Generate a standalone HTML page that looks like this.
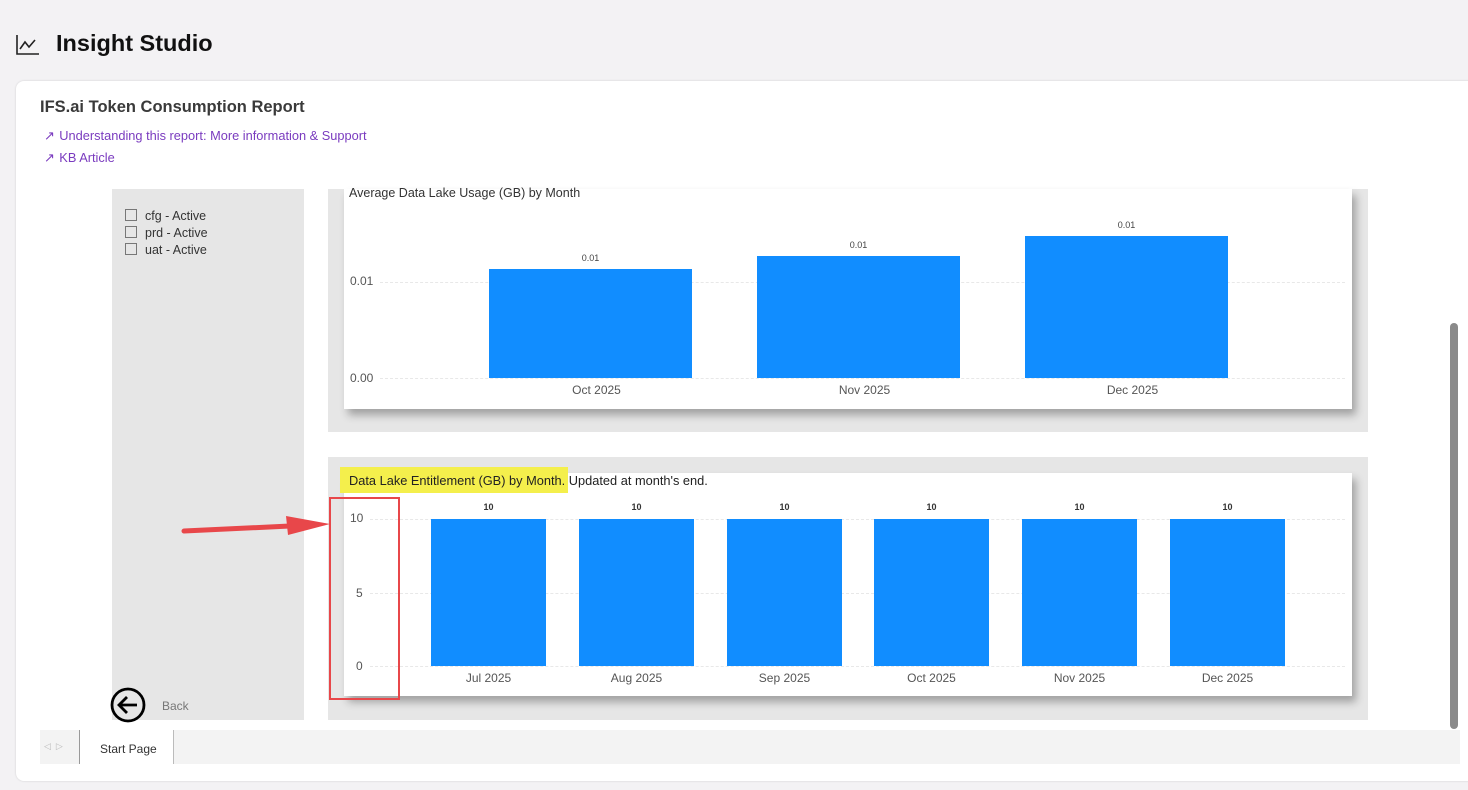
<!DOCTYPE html>
<html><head><meta charset="utf-8"><style>
*{margin:0;padding:0;box-sizing:border-box}
body{width:1468px;height:790px;background:#f3f2f4;font-family:"Liberation Sans",sans-serif;position:relative;overflow:hidden}
.a{position:absolute}
.t{font-size:12px;color:#555}
.bar{position:absolute;background:#118dff}
.g{position:absolute;height:0;border-top:1px dashed #e8e8e8}
</style></head><body>
<svg class="a" style="left:16px;top:34px" width="24" height="22" viewBox="0 0 24 22"><path d="M1 1V20H23" fill="none" stroke="#222" stroke-width="1.6"/><path d="M4 15L9 8L13 13L19 6" fill="none" stroke="#222" stroke-width="1.6"/></svg>
<div class="a" style="left:56px;top:30px;font-size:23.5px;font-weight:bold;color:#111">Insight Studio</div>
<div class="a" style="left:16px;top:81px;width:1470px;height:700px;background:#fff;border-radius:8px;box-shadow:0 0 2px rgba(0,0,0,.15)"></div>
<div class="a" style="left:40px;top:98px;font-size:16.5px;font-weight:bold;color:#3a3a3a">IFS.ai Token Consumption Report</div>
<div class="a" style="left:44px;top:128px;font-size:12.8px;color:#7a3bbf">&#x2197;&#xFE0E; <span style="margin-left:1px">Understanding this report: More information &amp; Support</span></div>
<div class="a" style="left:44px;top:150px;font-size:12.8px;color:#7a3bbf">&#x2197;&#xFE0E; <span style="margin-left:1px">KB Article</span></div>
<div class="a" style="left:112px;top:189px;width:192px;height:531px;background:#e6e6e6"></div>
<div class="a" style="left:125px;top:208px;font-size:12.5px;color:#333;line-height:17px">
<div><span style="display:inline-block;width:12px;height:12px;border:1px solid #777;vertical-align:-1px;margin-right:8px"></span>cfg - Active</div>
<div><span style="display:inline-block;width:12px;height:12px;border:1px solid #777;vertical-align:-1px;margin-right:8px"></span>prd - Active</div>
<div><span style="display:inline-block;width:12px;height:12px;border:1px solid #777;vertical-align:-1px;margin-right:8px"></span>uat - Active</div></div>
<svg class="a" style="left:109px;top:686px" width="38" height="38"><circle cx="19" cy="19" r="16" fill="none" stroke="#000" stroke-width="2.8"/><path d="M28 19H11M18 11L10 19L18 27" fill="none" stroke="#000" stroke-width="2.8"/></svg>
<div class="a t" style="left:162px;top:699px;color:#777">Back</div>
<!-- top chart -->
<div class="a" style="left:328px;top:189px;width:1040px;height:243px;background:#e6e6e6"></div>
<div class="a" style="left:344px;top:189px;width:1008px;height:220px;background:#fff;box-shadow:4px 6px 8px rgba(0,0,0,.3)"></div>
<div class="a" style="left:349px;top:186px;font-size:12.5px;color:#333">Average Data Lake Usage (GB) by Month</div>
<div class="g" style="left:380px;top:282px;width:965px"></div>
<div class="g" style="left:380px;top:378px;width:965px"></div>
<div class="a t" style="left:350px;top:274px">0.01</div>
<div class="a t" style="left:350px;top:371px">0.00</div>
<div class="bar" style="left:489px;top:269px;width:203px;height:109px"></div>
<div class="bar" style="left:757px;top:256px;width:203px;height:122px"></div>
<div class="bar" style="left:1025px;top:236px;width:203px;height:142px"></div>
<div class="a" style="left:489px;width:203px;top:253px;text-align:center;font-size:9px;color:#444">0.01</div>
<div class="a" style="left:757px;width:203px;top:240px;text-align:center;font-size:9px;color:#444">0.01</div>
<div class="a" style="left:1025px;width:203px;top:220px;text-align:center;font-size:9px;color:#444">0.01</div>
<div class="a t" style="left:489px;width:215px;top:383px;text-align:center">Oct 2025</div>
<div class="a t" style="left:757px;width:215px;top:383px;text-align:center">Nov 2025</div>
<div class="a t" style="left:1025px;width:215px;top:383px;text-align:center">Dec 2025</div>
<!-- bottom chart -->
<div class="a" style="left:328px;top:457px;width:1040px;height:263px;background:#e6e6e6"></div>
<div class="a" style="left:344px;top:473px;width:1008px;height:223px;background:#fff;box-shadow:4px 6px 8px rgba(0,0,0,.3)"></div>
<div class="a" style="left:340px;top:467px;width:228px;height:26px;background:#f4ef4c"></div>
<div class="a" style="left:349px;top:473px;font-size:12.8px;color:#222">Data Lake Entitlement (GB) by Month. Updated at month's end.</div>
<div class="g" style="left:370px;top:519px;width:975px"></div>
<div class="g" style="left:370px;top:593px;width:975px"></div>
<div class="g" style="left:370px;top:666px;width:975px"></div>
<div class="a t" style="left:350px;top:511px">10</div>
<div class="a t" style="left:356px;top:586px">5</div>
<div class="a t" style="left:356px;top:659px">0</div>
<div class="bar" style="left:431px;top:519px;width:115px;height:147px"></div>
<div class="bar" style="left:579px;top:519px;width:115px;height:147px"></div>
<div class="bar" style="left:727px;top:519px;width:115px;height:147px"></div>
<div class="bar" style="left:874px;top:519px;width:115px;height:147px"></div>
<div class="bar" style="left:1022px;top:519px;width:115px;height:147px"></div>
<div class="bar" style="left:1170px;top:519px;width:115px;height:147px"></div>
<div class="a" style="left:431px;width:115px;top:502px;text-align:center;font-size:9px;font-weight:bold;color:#333">10</div>
<div class="a" style="left:579px;width:115px;top:502px;text-align:center;font-size:9px;font-weight:bold;color:#333">10</div>
<div class="a" style="left:727px;width:115px;top:502px;text-align:center;font-size:9px;font-weight:bold;color:#333">10</div>
<div class="a" style="left:874px;width:115px;top:502px;text-align:center;font-size:9px;font-weight:bold;color:#333">10</div>
<div class="a" style="left:1022px;width:115px;top:502px;text-align:center;font-size:9px;font-weight:bold;color:#333">10</div>
<div class="a" style="left:1170px;width:115px;top:502px;text-align:center;font-size:9px;font-weight:bold;color:#333">10</div>
<div class="a t" style="left:431px;width:115px;top:671px;text-align:center">Jul 2025</div>
<div class="a t" style="left:579px;width:115px;top:671px;text-align:center">Aug 2025</div>
<div class="a t" style="left:727px;width:115px;top:671px;text-align:center">Sep 2025</div>
<div class="a t" style="left:874px;width:115px;top:671px;text-align:center">Oct 2025</div>
<div class="a t" style="left:1022px;width:115px;top:671px;text-align:center">Nov 2025</div>
<div class="a t" style="left:1170px;width:115px;top:671px;text-align:center">Dec 2025</div>
<div class="a" style="left:329px;top:497px;width:71px;height:203px;border:2.5px solid #e8474a"></div>
<svg class="a" style="left:178px;top:510px" width="160" height="30"><path d="M6 21L112 16" stroke="#e8474a" stroke-width="5" stroke-linecap="round"/><path d="M108 6L152 14L110 25Z" fill="#e8474a"/></svg>
<!-- scrollbar -->
<div class="a" style="left:1450px;top:323px;width:8px;height:406px;background:#8a8a8a;border-radius:4px"></div>
<!-- tabs -->
<div class="a" style="left:40px;top:730px;width:1420px;height:34px;background:#f3f3f3"></div>
<div class="a" style="left:44px;top:741px;font-size:9px;color:#bbb">&#9665; &nbsp;&#9655;</div>
<div class="a" style="left:79px;top:730px;width:95px;height:34px;background:#fff;border-left:1px solid #999;border-right:1px solid #bbb"></div>
<div class="a" style="left:100px;top:742px;font-size:12px;color:#333">Start Page</div>
</body></html>
